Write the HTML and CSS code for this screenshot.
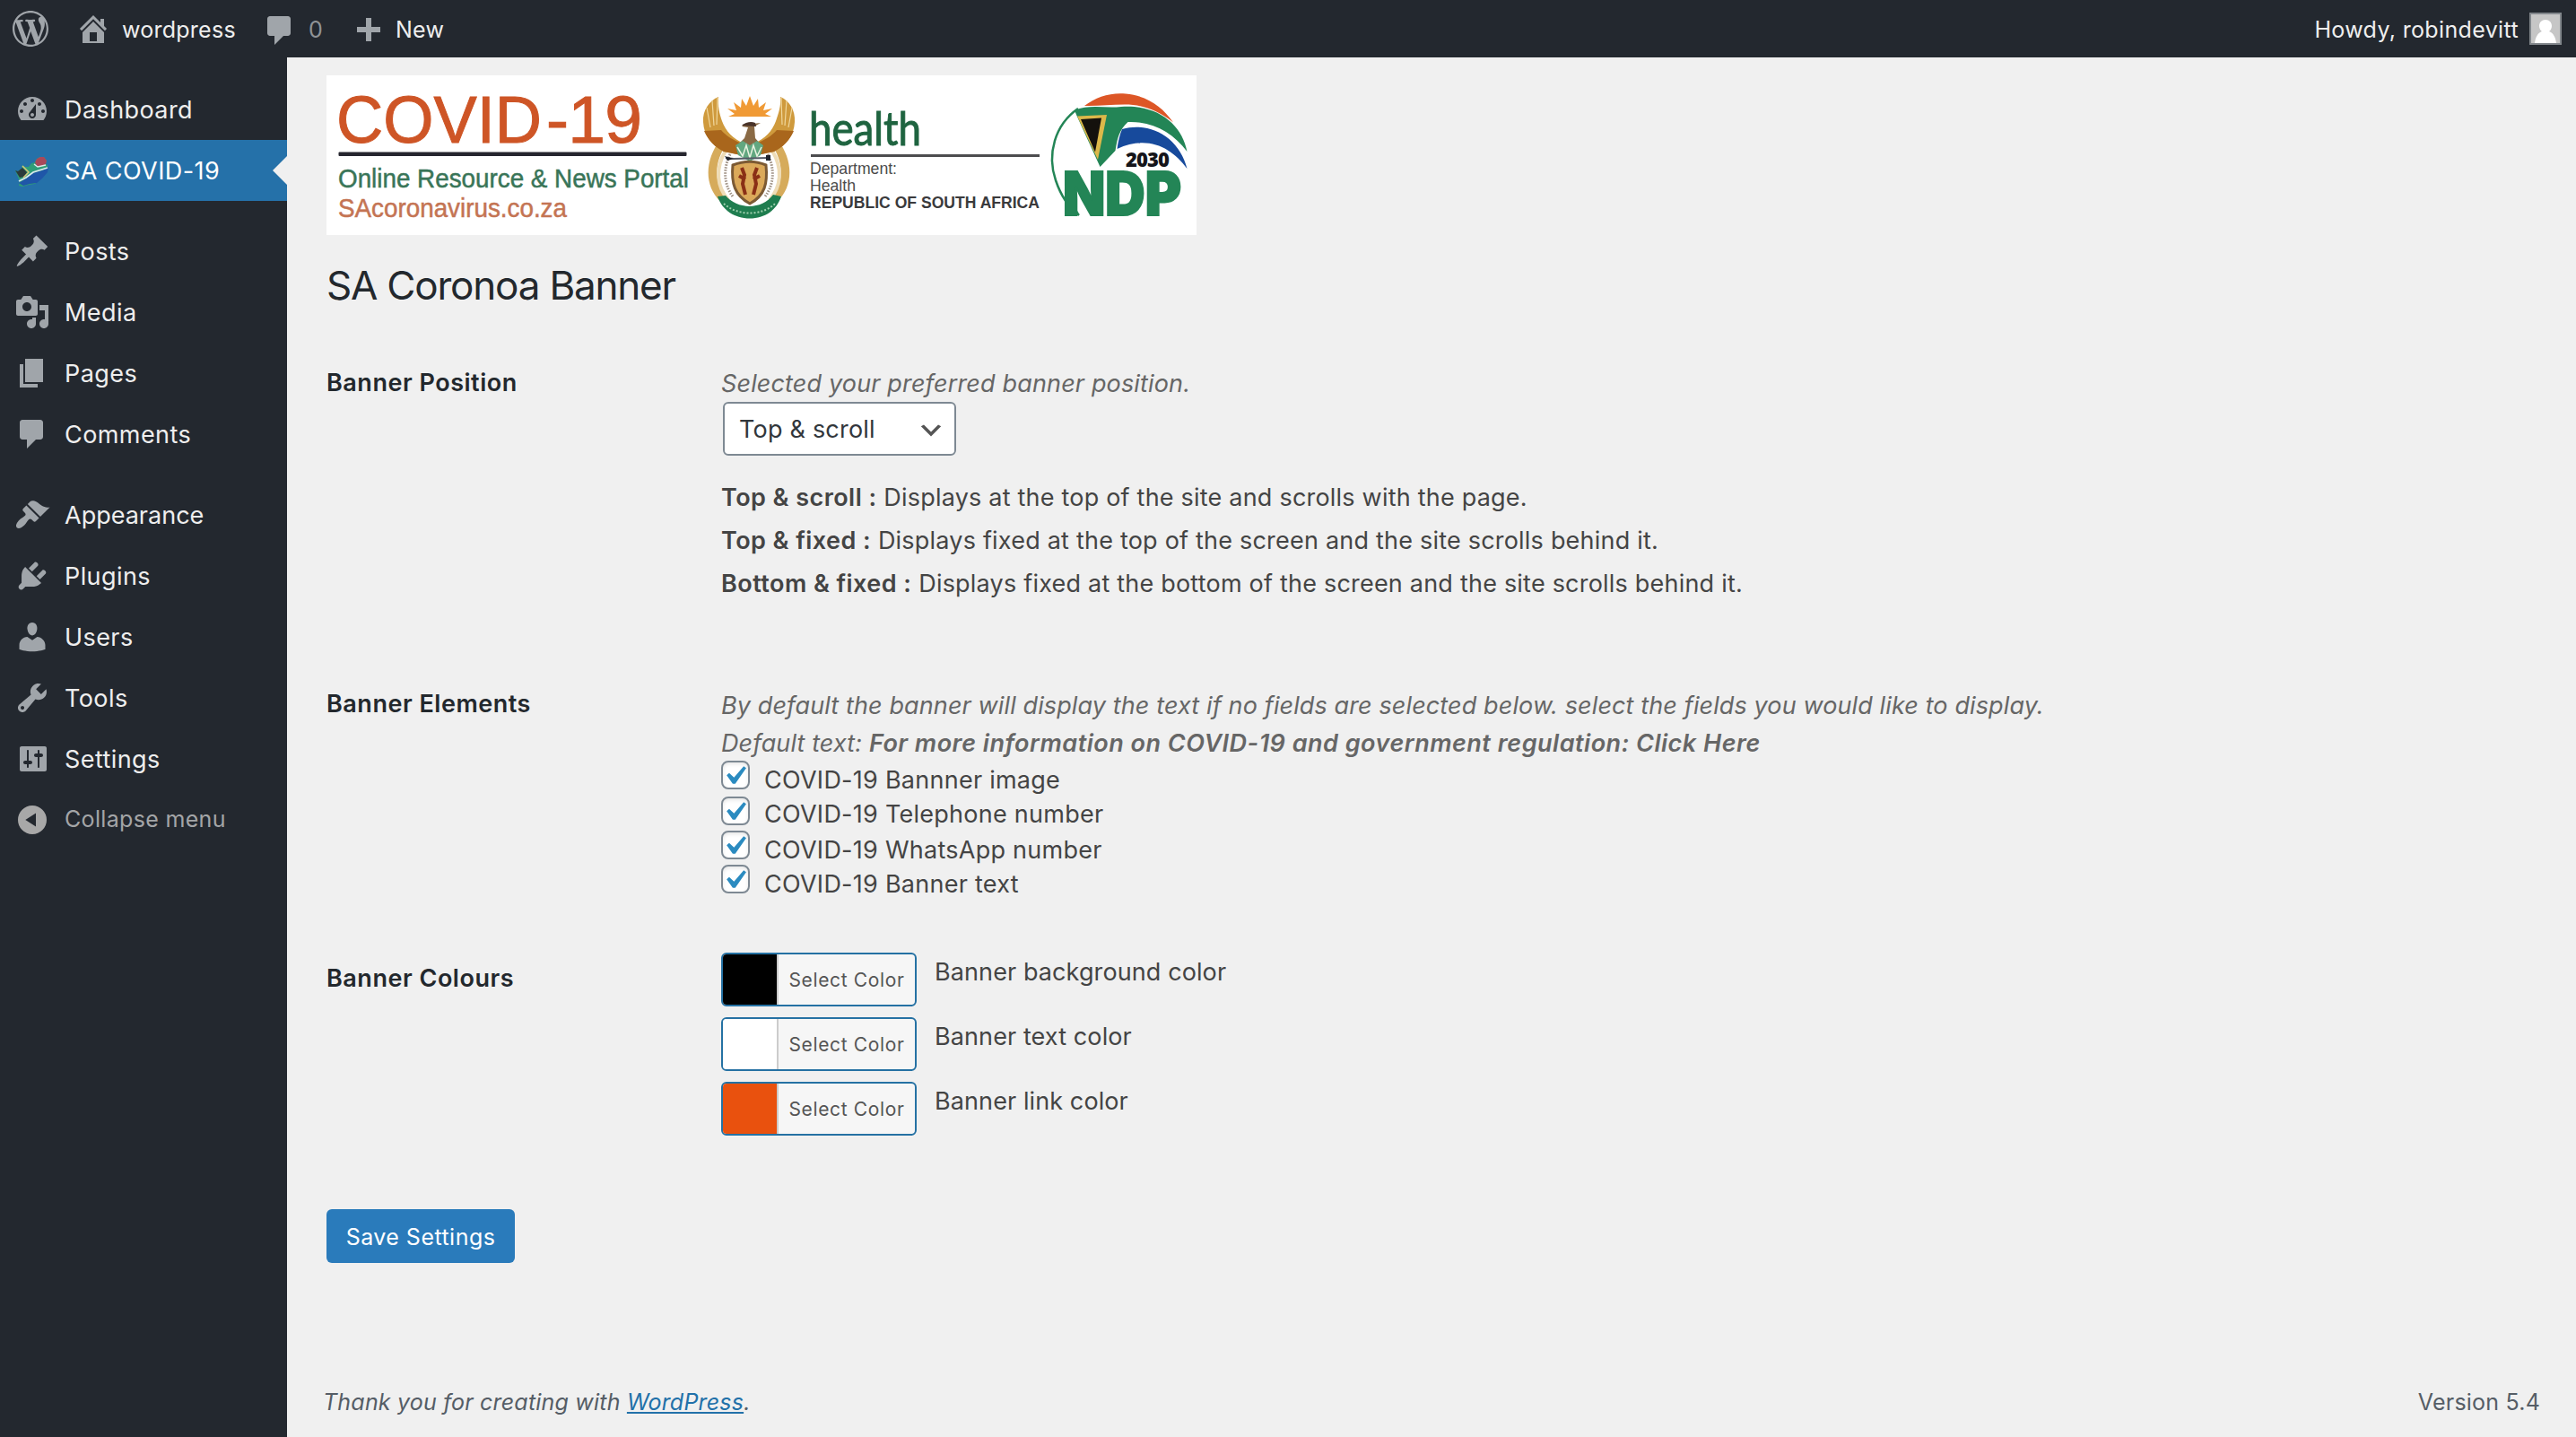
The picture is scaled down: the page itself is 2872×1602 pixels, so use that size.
FILE: index.html
```html
<!DOCTYPE html>
<html lang="en">
<head>
<meta charset="utf-8">
<title>SA Coronoa Banner</title>
<link rel="stylesheet" href="styles.css">
</head>
<body>
<header class="adminbar">
  <a class="bar-item bar-logo"><svg class="dashicon" viewBox="0 0 20 20"><path d="M20 10c0-5.51-4.49-10-10-10C4.48 0 0 4.49 0 10c0 5.52 4.48 10 10 10 5.51 0 10-4.48 10-10zM7.78 15.37L4.37 6.22c.55-.02 1.17-.08 1.17-.08.5-.06.44-1.13-.06-1.11 0 0-1.45.11-2.37.11-.18 0-.37 0-.58-.01C4.12 2.69 6.87 1.11 10 1.11c2.33 0 4.45.87 6.05 2.34-.68-.11-1.65.39-1.65 1.58 0 .74.45 1.36.9 2.1.35.61.55 1.36.55 2.46 0 1.49-1.4 5-1.4 5l-3.03-8.37c.54-.02.82-.17.82-.17.5-.05.44-1.25-.06-1.22 0 0-1.44.12-2.38.12-.87 0-2.33-.12-2.33-.12-.5-.03-.56 1.2-.06 1.22l.92.08 1.26 3.41zM17.41 10c.24-.64.74-1.87.43-4.25.7 1.29 1.05 2.71 1.05 4.25 0 3.29-1.73 6.24-4.4 7.78.97-2.59 1.94-5.2 2.92-7.78zM6.1 18.09C3.12 16.65 1.11 13.53 1.11 10c0-1.3.23-2.48.72-3.59C3.25 10.3 4.67 14.2 6.1 18.09zm4.03-6.63l2.58 6.98c-.86.29-1.76.45-2.71.45-.79 0-1.57-.11-2.29-.33.81-2.38 1.62-4.74 2.42-7.1z"/></svg></a>
  <a class="bar-item bar-site"><svg class="dashicon" viewBox="0 0 20 20"><path d="M16 8.5l1.53 1.53-1.06 1.06L10 4.6l-6.47 6.49-1.06-1.06L10 2.5l4 4v-2h2v4zm-6-2.46l6 5.99V18H4v-5.97zM12 17v-5H8v5h4z"/></svg><span>wordpress</span></a>
  <a class="bar-item bar-comments"><svg class="dashicon" viewBox="0 0 20 20"><path d="M4.500 2h10c.83 0 1.500.67 1.500 1.500v8c0 .83-.67 1.500-1.500 1.500H12l-5 5v-5H4.500C3.670 13 3 12.330 3 11.500v-8C3 2.670 3.670 2 4.500 2z"/></svg><span>0</span></a>
  <a class="bar-item bar-new"><svg class="dashicon" viewBox="0 0 20 20"><path d="M16.5 8.5v3h-5v5h-3v-5h-5v-3h5v-5h3v5z"/></svg><span>New</span></a>
  <a class="bar-item bar-account"><span>Howdy, robindevitt</span><svg class="avatar" viewBox="0 0 36 36"><rect width="36" height="36" fill="#82878c"/><rect x="2" y="2" width="32" height="32" fill="#c6c6c6"/><path d="M18 8c4.200 0 7 3.100 7 6.900 0 2.600-1.300 4.700-3 6 4.500 1.600 7.300 6.500 8 13.100H6c.7-6.600 3.500-11.500 8-13.100-1.700-1.300-3-3.400-3-6C11 11.100 13.800 8 18 8z" fill="#fff"/></svg></a>
</header>
<div class="shell">
  <nav class="menu">
    <a class="menu-item"><svg class="dashicon" viewBox="0 0 20 20"><path d="M3.76 16h12.48c1.1-1.37 1.76-3.11 1.76-5 0-4.42-3.58-8-8-8s-8 3.58-8 8c0 1.89.66 3.63 1.76 5zM10 4c.55 0 1 .45 1 1s-.45 1-1 1-1-.45-1-1 .45-1 1-1zM6 6c.55 0 1 .45 1 1s-.45 1-1 1-1-.45-1-1 .45-1 1-1zm8 0c.55 0 1 .45 1 1s-.45 1-1 1-1-.45-1-1 .45-1 1-1zm-5.370 5.550L12 7v6c0 1.100-.9 2-2 2s-2-.9-2-2c0-.57.24-1.080.630-1.450zM4 10c.55 0 1 .45 1 1s-.45 1-1 1-1-.45-1-1 .45-1 1-1zm12 0c.55 0 1 .45 1 1s-.45 1-1 1-1-.45-1-1 .45-1 1-1zm-5 3c0-.55-.45-1-1-1s-1 .45-1 1 .45 1 1 1 1-.45 1-1z"/></svg><span>Dashboard</span></a>
    <a class="menu-item current"><svg class="dashicon flag" viewBox="0 0 40 40"><path d="M1 20l3 1 4-3 1-4 3 2 4 0 3-4 4-1 1-3 4-3 5 0 3 4-1 4 2 1-1 6-3 5-5 6-5 4-7 1-7 2-4-1 1-5z" fill="#2f9e77"/><path d="M23 11l2-4 4-2 4 0 3 4-1 4-5 2-5 0z" fill="#a8485a"/><path d="M22 13l4 3 9-2" fill="none" stroke="#dfe8e8" stroke-width="1.500"/><path d="M5 34l8-5 8-6 10-3 7-3-1 5-6 7-6 5-8 1-7 2z" fill="#1f56a8"/><path d="M5 32l8-4 8-6 16-5" fill="none" stroke="#dbe7ef" stroke-width="1.800"/><path d="M1 20l3 1 5-4 5 5-3 5-5 1z" fill="#2b3a3c"/><path d="M9 15l7 7-6 6" fill="none" stroke="#d8c47a" stroke-width="1.500"/></svg><span>SA COVID-19</span></a>
    <div class="menu-gap"></div>
    <a class="menu-item"><svg class="dashicon" viewBox="0 0 20 20"><path d="M10.44 3.020l1.820-1.820 6.360 6.350-1.830 1.820c-1.050-.68-2.480-.57-3.410.36l-.75.75c-.92.93-1.040 2.350-.35 3.410l-1.830 1.820-2.410-2.410-2.800 2.790c-.42.42-3.380 2.710-3.800 2.290s1.860-3.390 2.280-3.810l2.790-2.790L4.100 9.360l1.830-1.820c1.050.69 2.480.57 3.400-.36l.75-.75c.93-.92 1.050-2.350.36-3.410z"/></svg><span>Posts</span></a>
    <a class="menu-item"><svg class="dashicon" viewBox="0 0 20 20"><path d="M13 11V4c0-.55-.45-1-1-1h-1.670L9 1H5L3.670 3H2c-.55 0-1 .45-1 1v7c0 .55.45 1 1 1h10c.55 0 1-.45 1-1zM7 4.500c1.380 0 2.500 1.120 2.500 2.500S8.380 9.500 7 9.500 4.500 8.380 4.500 7 5.620 4.500 7 4.500zM14 6h5v10.500c0 1.380-1.120 2.500-2.500 2.500S14 17.880 14 16.500s1.120-2.500 2.500-2.500c.17 0 .34.02.5.05V9h-3V6zm-4 8.050V13h2v3.500c0 1.380-1.120 2.500-2.500 2.500S7 17.880 7 16.500 8.120 14 9.500 14c.17 0 .34.02.5.05z"/></svg><span>Media</span></a>
    <a class="menu-item"><svg class="dashicon" viewBox="0 0 20 20"><path d="M6 15V2h10v13H6zm-1 1h8v2H3V5h2v11z"/></svg><span>Pages</span></a>
    <a class="menu-item"><svg class="dashicon" viewBox="0 0 20 20"><path d="M4.500 2h10c.83 0 1.500.67 1.500 1.500v8c0 .83-.67 1.500-1.500 1.500H12l-5 5v-5H4.500C3.670 13 3 12.330 3 11.500v-8C3 2.670 3.670 2 4.500 2z"/></svg><span>Comments</span></a>
    <div class="menu-gap"></div>
    <a class="menu-item appearance"><svg class="dashicon" viewBox="0 0 20 20"><path d="M14.480 11.060L7.410 3.990l1.500-1.500c.5-.56 2.300-.47 3.510.32 1.210.8 1.430 1.280 2.910 2.100 1.180.64 2.450 1.260 4.450.85zm-.71.71L6.700 4.700 4.930 6.470c-.39.39-.39 1.020 0 1.410l1.060 1.060c.39.39.39 1.030 0 1.420-.6.6-1.430 1.110-2.210 1.690-.35.26-.7.53-1.010.84C1.430 14.230.4 16.080 1.400 17.070c.99 1 2.840-.03 4.180-1.360.31-.31.58-.66.85-1.020.57-.78 1.080-1.610 1.690-2.210.39-.39 1.020-.39 1.410 0l1.060 1.060c.39.39 1.020.39 1.410 0z"/></svg><span>Appearance</span></a>
    <a class="menu-item"><svg class="dashicon" viewBox="0 0 20 20"><path d="M13.110 4.360L9.870 7.600 8 5.730l3.240-3.240c.35-.34 1.050-.2 1.560.32.52.51.66 1.210.31 1.550zm-8 1.770l.91-1.120 9.010 9.010-1.190.84c-.71.71-2.630 1.160-3.820 1.160H6.140L4.900 17.260c-.59.59-1.540.59-2.120 0-.59-.58-.59-1.530 0-2.120l1.240-1.240v-3.880c0-1.130.4-3.190 1.090-3.890zm7.260 3.970l3.240-3.240c.34-.35 1.040-.21 1.550.31.52.51.66 1.210.31 1.550l-3.240 3.250z"/></svg><span>Plugins</span></a>
    <a class="menu-item"><svg class="dashicon" viewBox="0 0 20 20"><path d="M10 9.250c-2.270 0-2.730-3.440-2.730-3.440C7 4.020 7.820 2 9.970 2c2.160 0 2.980 2.020 2.710 3.810 0 0-.41 3.440-2.680 3.440zm0 2.570L12.720 10c2.390 0 4.520 2.330 4.520 4.530v2.490s-3.650 1.130-7.240 1.130c-3.650 0-7.240-1.130-7.240-1.130v-2.490c0-2.250 1.940-4.480 4.470-4.480z"/></svg><span>Users</span></a>
    <a class="menu-item"><svg class="dashicon" viewBox="0 0 20 20"><path d="M16.680 9.770c-1.340 1.340-3.300 1.670-4.950.99l-5.410 6.520c-.99.99-2.590.99-3.580 0s-.99-2.590 0-3.570l6.520-5.420c-.68-1.650-.35-3.610.99-4.950 1.280-1.280 3.120-1.620 4.720-1.060l-2.890 2.890 2.820 2.820 2.860-2.870c.53 1.580.18 3.390-1.080 4.650zM3.810 16.210c.4.39 1.040.39 1.430 0 .4-.4.4-1.040 0-1.430-.39-.4-1.030-.4-1.430 0-.39.39-.39 1.030 0 1.430z"/></svg><span>Tools</span></a>
    <a class="menu-item"><svg class="dashicon" viewBox="0 0 20 20"><path d="M18 16V4c0-.55-.45-1-1-1H4c-.55 0-1 .45-1 1v12c0 .55.45 1 1 1h13c.55 0 1-.45 1-1zM8 11h1c.55 0 1 .45 1 1s-.45 1-1 1H8v1.500c0 .28-.22.5-.5.5s-.5-.22-.5-.5V13H6c-.55 0-1-.45-1-1s.45-1 1-1h1V5.500c0-.28.22-.5.5-.5s.5.22.5.5V11zm5-2h-1c-.55 0-1-.45-1-1s.45-1 1-1h1V5.500c0-.28.22-.5.5-.5s.5.22.5.5V7h1c.55 0 1 .45 1 1s-.45 1-1 1h-1v5.500c0 .28-.22.5-.5.5s-.5-.22-.5-.5V9z"/></svg><span>Settings</span></a>
    <a class="menu-item collapse"><svg class="dashicon" viewBox="0 0 20 20"><path fill-rule="evenodd" d="M10 2a8 8 0 1 0 0 16 8 8 0 0 0 0-16zM6.150 10L12 6.200v7.600z"/></svg><span>Collapse menu</span></a>
  </nav>
  <main class="content">
    <svg class="banner" viewBox="0 0 970 178">
      <rect width="970" height="178" fill="#fff"/>
      <g class="portal">
        <text x="11" y="75.300" font-size="75" textLength="229" lengthAdjust="spacingAndGlyphs" fill="#ce5526" stroke="#ce5526">COVID</text>
        <text x="245" y="75.300" font-size="75" textLength="107" fill="#ce5526" stroke="#ce5526">-19</text>
        <rect x="13.500" y="85.500" width="388" height="4.500" rx="1" fill="#26262f"/>
        <text x="13" y="125" font-size="29" textLength="391" lengthAdjust="spacingAndGlyphs" fill="#397558" stroke="#397558" stroke-width=".5">Online Resource &amp; News Portal</text>
        <text x="13" y="158.300" font-size="29" textLength="255" lengthAdjust="spacingAndGlyphs" fill="#c47453" stroke="#c47453" stroke-width=".5">SAcoronavirus.co.za</text>
      </g>
      <g class="emblem">
        <path d="M436 76C420 100 423 128 442 143l5-5C433 122 431 100 444 80zM506 76c16 24 13 52-6 67l-5-5c14-16 16-38 3-58z" fill="#d6ab5b"/>
        <path d="M445 84c-12 20-10 40 3 55M497 84c12 20 10 40-3 55" fill="none" stroke="#eedcb6" stroke-width="4"/>
        <path d="M450 88c-8 16-7 34 3 47M492 88c8 16 7 34-3 47" fill="none" stroke="#9d8f82" stroke-width="3" stroke-dasharray="1.500 1.500"/>
        <path d="M437 24c-10 4-18 15-17 28 1 16 9 25 23 33l20 4 3-13c-13-5-21-14-25-25-3-9-5-17-4-27zM506 24c10 4 17 15 16 28-1 16-9 25-23 33l-20 4-3-13c13-5 21-14 25-25 3-9 6-17 5-27z" fill="#cf9a3d"/>
        <path d="M421 62c5 11 12 18 22 23l19 4 3-12c-12-5-20-10-25-16zM521 62c-5 11-12 18-22 23l-19 4-3-12c12-5 20-10 25-16z" fill="#a9661c"/>
        <path d="M436 25l-1 30M430 28l2 28M424 36l4 22M507 25l1 30M513 28l-2 28M519 36l-4 22" stroke="#f0d79c" stroke-width="1.200" fill="none"/>
        <path d="M448 46l7-3-8-6 10 2-3-9 8 6 1-10 5 8 4-11 4 11 5-8 1 10 8-6-3 9 10-2-8 6 7 3z" fill="#f09a35"/>
        <path d="M463 57c4-4 9-4 12-3l9-1-7 4 1 13 7 8h-27l8-8 4-12z" fill="#8a6a45"/>
        <path d="M463 56c4-4 11-5 15-3l1 4z" fill="#493329"/>
        <path d="M456 78l8-5 8 5 8-5 7 5-3 11-12 7-13-7z" fill="#62a780"/>
        <path d="M458 80l6 10 4-12 4 14 4-14 4 12 5-10" stroke="#e8f2e0" stroke-width="1.500" fill="none"/>
        <path d="M445 92l9 1 38-1" stroke="#555b66" stroke-width="2" fill="none"/>
        <path d="M444 90l10 3-7 2zM490 89h5v6h-5z" fill="#20242e"/>
        <path d="M453 100c13-5 25-5 37 0 2 20-1 34-18 43-17-9-21-23-19-43z" fill="#dba95a" stroke="#7c5a34" stroke-width="3"/>
        <path d="M463 103l3 8-2 10 3 12M480 103l-3 8 2 10-3 12M460 112l7 4M483 112l-7 4" stroke="#8a2f16" stroke-width="4" fill="none"/>
        <path d="M436 135l9-1c12 15 40 17 53-1l9 2c-5 15-18 24.500-35 24.500S441 150 436 135z" fill="#1f7d4f"/>
        <path d="M443 143c15 14 43 14 57 0" stroke="#9fd0ae" stroke-width="2" stroke-dasharray="2 2" fill="none"/>
      </g>
      <g class="department">
        <text class="health" x="538" y="78.300" font-size="52" textLength="125" lengthAdjust="spacingAndGlyphs" fill="#1f6440" stroke="#1f6440">health</text>
        <rect x="540" y="88" width="255" height="3" fill="#4d4d4f"/>
        <text x="539" y="109.500" font-size="18.500" textLength="97" lengthAdjust="spacingAndGlyphs" fill="#4c4c4c">Department:</text>
        <text x="539" y="128.500" font-size="18.500" textLength="51" lengthAdjust="spacingAndGlyphs" fill="#4c4c4c">Health</text>
        <text x="539" y="147.700" font-size="18.500" font-weight="700" textLength="256" lengthAdjust="spacingAndGlyphs" fill="#3a3a3c">REPUBLIC OF SOUTH AFRICA</text>
      </g>
      <g class="plan">
        <path d="M838 37C812 55 803 88 813 117c5 15 13 29 26 39" fill="none" stroke="#238556" stroke-width="2.500"/>
        <path d="M824 128l16 28-14-14z" fill="#238556"/>
        <path d="M845 34c13-10 29-15 46-13.500 23 2 41 14 53 32-16-13-34-20-54-20-16 0-30 2-45 1.500z" fill="#dd5626"/>
        <path d="M834 39c16-7 34-2 52-4 41-3 68 20 73.500 50-16-21-38-34-66-33-10 9-12 19-14 32l-17 18-26-57z" fill="#238556"/>
        <path d="M837 45.500l33-1.500-10 50z" fill="#dcb84a"/>
        <path d="M841 49l23-1.500-7 38z" fill="#14110d"/>
        <path d="M887 60c32-9 64 10 72.500 44-17-23-43-38-78-22 1-8 3-16 5.500-22z" fill="#174a9c"/>
        <text class="year" x="891" y="101.700" font-size="22" textLength="49" fill="#15151a">2030</text>
        <text class="ndp" x="821" y="156" font-size="68" textLength="132" lengthAdjust="spacingAndGlyphs" fill="#238556" stroke="#238556" stroke-width="2">NDP</text>
      </g>
    </svg>
    <h1 class="title">SA Coronoa Banner</h1>
    <section class="row row-position">
      <h2 class="label">Banner Position</h2>
      <div class="field">
        <p class="hint">Selected your preferred banner position.</p>
        <div class="select"><span>Top &amp; scroll</span><svg class="chevron" viewBox="0 0 20 20"><path d="M5 6l5 5 5-5 2 1-7 7-7-7 2-1z" fill="#555"/></svg></div>
        <ul class="options">
          <li><b>Top &amp; scroll :</b> Displays at the top of the site and scrolls with the page.</li>
          <li><b>Top &amp; fixed :</b> Displays fixed at the top of the screen and the site scrolls behind it.</li>
          <li><b>Bottom &amp; fixed :</b> Displays fixed at the bottom of the screen and the site scrolls behind it.</li>
        </ul>
      </div>
    </section>
    <section class="row row-elements">
      <h2 class="label">Banner Elements</h2>
      <div class="field">
        <p class="hint">By default the banner will display the text if no fields are selected below. select the fields you would like to display.</p>
        <p class="hint">Default text: <b>For more information on COVID-19 and government regulation: Click Here</b></p>
        <div class="checks">
          <label class="check"><span class="box"><svg class="tick" viewBox="0 0 20 20"><path d="M14.830 4.890l1.340.94-5.810 8.380H9.020L5.780 9.670l1.340-1.250 2.570 2.400z"/></svg></span><span>COVID-19 Bannner image</span></label>
          <label class="check"><span class="box"><svg class="tick" viewBox="0 0 20 20"><path d="M14.830 4.890l1.340.94-5.810 8.380H9.020L5.780 9.670l1.340-1.250 2.570 2.400z"/></svg></span><span>COVID-19 Telephone number</span></label>
          <label class="check"><span class="box"><svg class="tick" viewBox="0 0 20 20"><path d="M14.830 4.890l1.340.94-5.810 8.380H9.020L5.780 9.670l1.340-1.250 2.570 2.400z"/></svg></span><span>COVID-19 WhatsApp number</span></label>
          <label class="check"><span class="box"><svg class="tick" viewBox="0 0 20 20"><path d="M14.830 4.890l1.340.94-5.810 8.380H9.020L5.780 9.670l1.340-1.250 2.570 2.400z"/></svg></span><span>COVID-19 Banner text</span></label>
        </div>
      </div>
    </section>
    <section class="row row-colours">
      <h2 class="label">Banner Colours</h2>
      <div class="field colours">
        <div class="colour"><button class="picker"><span class="swatch swatch-black"></span><span class="picker-text">Select Color</span></button><span class="colour-name">Banner background color</span></div>
        <div class="colour"><button class="picker"><span class="swatch swatch-white"></span><span class="picker-text">Select Color</span></button><span class="colour-name">Banner text color</span></div>
        <div class="colour"><button class="picker"><span class="swatch swatch-orange"></span><span class="picker-text">Select Color</span></button><span class="colour-name">Banner link color</span></div>
      </div>
    </section>
    <button class="save">Save Settings</button>
    <footer class="footer">
      <p class="thanks">Thank you for creating with <a class="wp-link">WordPress</a>.</p>
      <p class="version">Version 5.4</p>
    </footer>
  </main>
</div>
</body>
</html>
```
FILE: styles.css
```css
* { box-sizing: border-box; }

body {
  margin: 0;
  width: 2872px;
  height: 1602px;
  overflow: hidden;
  display: flex;
  flex-direction: column;
  background: #f0f0f0;
  color: #444;
  font: 400 27px/41px Inter, "Liberation Sans", sans-serif;
  letter-spacing: 0.21px;
}

h1, h2, p, ul { margin: 0; padding: 0; font-weight: 400; list-style: none; }
b { font-weight: 600; letter-spacing: 0.45px; }
button { font: inherit; padding: 0; }
svg { display: block; flex: none; }

.dashicon { width: 40px; height: 40px; fill: #a0a5aa; }

/* Admin bar */
.adminbar {
  flex: none;
  height: 64px;
  display: flex;
  background: #23282f;
  color: #eee;
  font-size: 25px;
  line-height: 66px;
  letter-spacing: 0.25px;
}
.bar-item { display: flex; align-items: flex-start; }
.bar-logo { width: 84px; padding: 12px 0 0 14px; }
.bar-site { width: 208px; gap: 12px; }
.bar-comments { width: 99px; gap: 12px; }
.bar-comments span { color: #8f9396; }
.bar-new { gap: 10px; }
.bar-site .dashicon { margin-top: 12px; }
.bar-comments .dashicon { margin-top: 14px; }
.bar-new .dashicon { margin-top: 13px; }
.bar-account { margin-left: auto; padding-right: 16px; gap: 12px; letter-spacing: 0.36px; }
.avatar { width: 36px; height: 36px; margin-top: 14px; }

.shell { flex: 1; display: flex; }

/* Side menu */
.menu {
  flex: none;
  width: 320px;
  padding-top: 24px;
  background: #23282f;
  color: #eee;
  letter-spacing: 0.42px;
}
.menu-item {
  position: relative;
  height: 68px;
  padding: 14px 0 0 16px;
  display: flex;
  gap: 16px;
}
.menu-item span { line-height: 41px; }
.menu-gap { height: 22px; }
.appearance { letter-spacing: 0; }
.current { background: #2571a9; color: #fff; }
.current::after {
  content: "";
  position: absolute;
  right: 0;
  top: 18px;
  border: 16px solid transparent;
  border-left-width: 0;
  border-right-color: #f0f0f0;
}
.collapse { color: #a3a5a7; font-size: 25px; letter-spacing: 0.33px; }
.collapse span { line-height: 38px; }
.collapse .dashicon { fill: #a8a8a8; }

/* Page content */
.content {
  flex: 1;
  padding: 20px 40px 0 44px;
  display: flex;
  flex-direction: column;
}
.banner { width: 970px; height: 178px; font-family: "Liberation Sans", sans-serif; letter-spacing: 0; }
.health { font-family: Lato, sans-serif; }
.year { font-family: "Open Sans", sans-serif; font-weight: 800; }
.ndp { font-family: Inter, sans-serif; font-weight: 900; }

.title {
  margin-top: 26px;
  color: #23282d;
  font-size: 44px;
  line-height: 60px;
  letter-spacing: -1.2px;
}

.row { display: grid; grid-template-columns: 440px 1fr; }
.row-position { margin-top: 59px; height: 358px; }
.row-elements { height: 297px; }
.row-colours { height: 286px; }
.label {
  margin-top: -1px;
  color: #23282d;
  font-size: 27px;
  font-weight: 600;
  letter-spacing: 0.52px;
}
.row-colours .label { margin-top: 8px; }

.hint {
  padding-top: 1px;
  color: #666;
  font-style: italic;
  letter-spacing: 0.115px;
}
.hint b { letter-spacing: 0.5px; }
.row-position .hint { padding-top: 0; letter-spacing: 0.15px; }

.select {
  width: 260px;
  height: 60px;
  margin-left: 2px;
  padding: 0 10px 0 16px;
  display: flex;
  justify-content: space-between;
  border: 2px solid #7e8993;
  border-radius: 6px;
  background: #fff;
  color: #32373c;
}
.select span { padding-top: 1px; line-height: 55px; }
.chevron { width: 32px; height: 32px; margin-top: 14px; }

.options { margin-top: 22px; line-height: 47px; }
.options li { padding-top: 1px; }

.checks {
  margin-top: -1px;
  display: grid;
  grid-template-rows: 40px 38px 38px 32px;
  letter-spacing: 0.26px;
}
.check { display: flex; gap: 16px; line-height: 33px; }
.check span + span { padding-top: 5px; }
.check:nth-child(2) span + span { padding-top: 3px; }
.box {
  position: relative;
  width: 32px;
  height: 32px;
  border: 2px solid #7e8993;
  border-radius: 8px;
  background: #fff;
  box-shadow: inset 0 2px 4px rgba(0, 0, 0, 0.1);
}
.tick { position: absolute; left: -8px; top: -6px; width: 42px; height: 42px; fill: #2b8bc0; }

.colours { display: flex; flex-direction: column; gap: 12px; }
.colour { display: flex; gap: 20px; }
.picker {
  width: 218px;
  height: 60px;
  display: flex;
  overflow: hidden;
  border: 2px solid #2571a3;
  border-radius: 6px;
  background: #f6f6f6;
  color: #555;
}
.swatch { width: 62px; height: 56px; border-right: 2px solid #ccc; }
.swatch-black { background: #000; }
.swatch-white { background: #fff; }
.swatch-orange { background: #e9510e; }
.picker-text { flex: 1; font-size: 21px; line-height: 57px; letter-spacing: 0.65px; text-align: center; }
.colour-name { padding-top: 1px; letter-spacing: 0.1px; }

.save {
  width: 210px;
  height: 60px;
  border: 0;
  border-radius: 6px;
  background: #2a7bbb;
  color: #fff;
  font-size: 25px;
  line-height: 62px;
  letter-spacing: 0.47px;
}

.footer {
  margin-top: 135px;
  margin-left: -4px;
  display: flex;
  justify-content: space-between;
  color: #555d66;
  font-size: 25px;
  line-height: 40px;
}
.thanks { font-style: italic; letter-spacing: 0.2px; }
.wp-link { color: #2271a9; text-decoration: underline; text-decoration-thickness: 2px; text-underline-offset: 2px; }
```
